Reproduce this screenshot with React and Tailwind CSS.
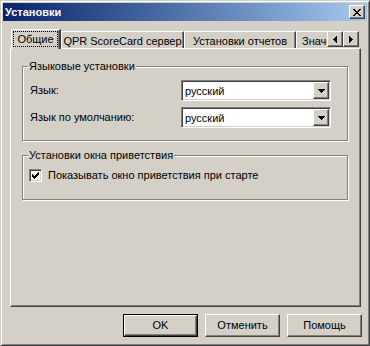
import React from 'react';

const raised =
  'border border-t-white border-l-white border-r-[#404040] border-b-[#404040] shadow-[inset_-1px_-1px_0_#808080]';
const sunken =
  'border border-t-[#808080] border-l-[#808080] border-r-white border-b-white shadow-[inset_1px_1px_0_#404040,inset_-1px_-1px_0_#d4d0c8]';

function PixelGlyph({ rows, className }) {
  const w = rows[0].length;
  const h = rows.length;
  return (
    <svg width={w} height={h} viewBox={`0 0 ${w} ${h}`} shapeRendering="crispEdges" className={className}>
      {rows.map((row, y) =>
        row.split('').map((c, x) =>
          c === 'x' ? <rect key={`${x}-${y}`} x={x} y={y} width="1" height="1" fill="#000" /> : null
        )
      )}
    </svg>
  );
}

const closeGlyph = ['xx....xx', '.xx..xx.', '..xxxx..', '...xx...', '..xxxx..', '.xx..xx.', 'xx....xx'];
const checkGlyph = ['......x', '.....xx', 'x...xxx', 'xx.xxx.', 'xxxxx..', '.xxx...', '..x....'];
const downGlyph = ['xxxxxxx', '.xxxxx.', '..xxx..', '...x...'];
const leftGlyph = ['...x', '..xx', '.xxx', 'xxxx', '.xxx', '..xx', '...x'];
const rightGlyph = ['x...', 'xx..', 'xxx.', 'xxxx', 'xxx.', 'xx..', 'x...'];

function Combo({ value }) {
  return (
    <div className={`flex h-[21px] w-[150px] bg-white p-[1px] ${sunken}`}>
      <div className="flex flex-1 items-center pl-[2px] pt-[1px]">{value}</div>
      <div className={`flex w-[16px] items-center justify-center bg-[#d4d0c8] ${raised}`}>
        <PixelGlyph rows={downGlyph} />
      </div>
    </div>
  );
}

function Group({ title, children, className = '' }) {
  return (
    <fieldset
      className={`ml-[11px] w-[326px] border border-[#808080] shadow-[inset_1px_1px_0_#fff,1px_1px_0_#fff] ${className}`}
    >
      <legend className="ml-[5px] bg-[#d4d0c8] px-[1px] leading-[13px]">{title}</legend>
      {children}
    </fieldset>
  );
}

function Button({ children, isDefault }) {
  const inner = (
    <div className={`flex h-full w-full items-center justify-center bg-[#d4d0c8] ${raised}`}>{children}</div>
  );
  return isDefault ? (
    <div className="h-[23px] w-[75px] border border-black">{inner}</div>
  ) : (
    <div className="h-[23px] w-[75px]">{inner}</div>
  );
}

export default function App() {
  const tabs = [
    { label: 'QPR ScoreCard сервер', w: 'w-[123px] justify-center' },
    { label: 'Установки отчетов', w: 'w-[112px] justify-center' },
    { label: 'Значения', w: 'w-[70px] justify-start pl-[5px]' },
  ];

  return (
    <div className="h-[346px] w-[370px] bg-[#d4d0c8] font-['Liberation_Sans',Arial,sans-serif] text-[11px] text-black">
      <div className="flex h-full w-full flex-col border border-t-[#d4d0c8] border-l-[#d4d0c8] border-r-[#404040] border-b-[#404040] p-[2px] shadow-[inset_1px_1px_0_#fff,inset_-1px_-1px_0_#808080]">
        {/* заголовок окна */}
        <div className="flex h-[18px] items-center justify-between bg-linear-to-r from-[#0a246a] to-[#a6caf0] pl-[2px] pr-[2px]">
          <span className="font-bold text-white">Установки</span>
          <div className={`flex h-[14px] w-[16px] items-center justify-center bg-[#d4d0c8] ${raised}`}>
            <PixelGlyph rows={closeGlyph} className="ml-[-1px]" />
          </div>
        </div>

        {/* вкладки */}
        <div className="ml-[7px] mr-[6px] mt-[8px] flex flex-col">
          <div className="relative z-10 flex h-[20px] items-end pl-[1px] pr-[2px]">
            <div className="flex h-full flex-1 items-end overflow-hidden">
              <div className="flex h-[20px] w-[50px] shrink-0 border-l border-t border-l-white border-t-white border-r-2 border-r-[#404040] bg-[#d4d0c8] shadow-[inset_-1px_0_0_#808080]">
                <div className="ml-[1px] mt-[1px] flex h-[16px] w-[45px] items-center justify-center border border-dotted border-black">
                  Общие
                </div>
              </div>
              {tabs.map((t) => (
                <div
                  key={t.label}
                  className={`mb-[1px] flex h-[17px] shrink-0 items-center whitespace-nowrap border-l border-t border-l-white border-t-white border-r border-r-[#404040] pt-[2px] shadow-[inset_-1px_0_0_#808080] ${t.w}`}
                >
                  {t.label}
                </div>
              ))}
            </div>
            <div className="mb-[2px] flex">
              <div className={`flex h-[16px] w-[16px] items-center justify-center bg-[#d4d0c8] ${raised}`}>
                <PixelGlyph rows={leftGlyph} />
              </div>
              <div className={`flex h-[16px] w-[16px] items-center justify-center bg-[#d4d0c8] ${raised}`}>
                <PixelGlyph rows={rightGlyph} />
              </div>
            </div>
          </div>

          {/* панель вкладки */}
          <div className={`-mt-[1px] flex h-[259px] flex-col ${raised}`}>
            <Group title="Языковые установки" className="mt-[11px] pb-[12px]">
              <div className="mt-[7px] flex items-center pl-[7px]">
                <span className="w-[151px]">Язык:</span>
                <Combo value="русский" />
              </div>
              <div className="mt-[6px] flex items-center pl-[7px]">
                <span className="w-[151px]">Язык по умолчанию:</span>
                <Combo value="русский" />
              </div>
            </Group>

            <Group title="Установки окна приветствия" className="mt-[8px] pb-[15px]">
              <div className="ml-[6px] mt-[5px] flex items-center gap-[6px]">
                <div className={`flex h-[13px] w-[13px] items-center justify-center bg-white ${sunken}`}>
                  <PixelGlyph rows={checkGlyph} />
                </div>
                <span>Показывать окно приветствия при старте</span>
              </div>
            </Group>
          </div>
        </div>

        {/* кнопки */}
        <div className="mr-[5px] mt-[7px] flex justify-end gap-[7px]">
          <Button isDefault>OK</Button>
          <Button>Отменить</Button>
          <Button>Помощь</Button>
        </div>
      </div>
    </div>
  );
}
